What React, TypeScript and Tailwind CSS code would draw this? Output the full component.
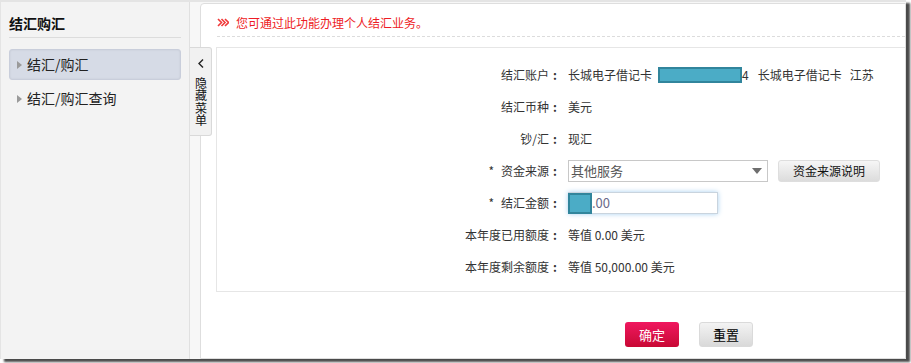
import React from "react";

function Tri() {
  return (
    <span className="inline-block w-0 h-0 border-y-[4px] border-y-transparent border-l-[5px] border-l-[#9a9a9a]" />
  );
}

function Row({ label, star, children }: { label: string; star?: boolean; children: React.ReactNode }) {
  return (
    <div className="flex items-center h-[32px]">
      <div className="w-[332px] text-right whitespace-nowrap">
        {star && <span className="mr-[7px]">*</span>}
        {label}
      </div>
      <span className="w-[12px] text-center font-bold">:</span>
      <div className="ml-[7px] flex items-center whitespace-nowrap">{children}</div>
    </div>
  );
}

export default function App() {
  return (
    <div className="w-[911px] h-[363px] bg-white font-['Noto_Sans_CJK_SC',sans-serif] text-[12px] text-[#333]">
      <div className="relative w-[906px] h-[359px] flex bg-[#f7f7f7] border-t-2 border-l border-[#e4e4e4] shadow-[4px_3px_2px_0_#4a4a4a]">
        {/* Sidebar */}
        <div className="w-[189px] h-full bg-[#f3f3f3] border-r border-[#e0e0e0] px-[8px]">
          <div className="h-[36px] pt-[12px] leading-[18px] text-[14px] font-bold text-[#111] border-b border-[#dcdcdc]">
            结汇购汇
          </div>
          <div className="mt-[11px] h-[31px] flex items-center rounded-[3px] bg-[#d6dbe6] border border-[#c9cedb] shadow-[inset_0_0_2px_rgba(0,0,0,0.08)] pl-[7px] text-[14px] text-[#222]">
            <Tri />
            <span className="ml-[5px]">结汇/购汇</span>
          </div>
          <div className="mt-[3px] h-[31px] flex items-center pl-[8px] text-[14px] text-[#222]">
            <Tri />
            <span className="ml-[5px]">结汇/购汇查询</span>
          </div>
        </div>

        {/* strip */}
        <div className="w-[10px] h-full bg-[#f7f7f7]" />

        {/* Hide menu tab */}
        <div className="absolute left-[189px] top-[45px] w-[22px] h-[89px] bg-[#f1f1f1] border border-l-0 border-[#d9d9d9] rounded-r-[3px] flex flex-col items-center text-[12px] text-[#111]">
          <svg width="6" height="9" viewBox="0 0 6 9" className="mt-[11px] mb-[9px] shrink-0">
            <polyline points="5,0.5 1,4.5 5,8.5" fill="none" stroke="#222" strokeWidth="1.4" />
          </svg>
          <span className="[writing-mode:vertical-rl] tracking-[0.5px] leading-[14px]">隐藏菜单</span>
        </div>

        {/* Main panel */}
        <div className="flex-1 mt-[1px] bg-white border border-[#dedede] rounded-tl-[4px]">
          <div className="ml-[16px] h-[33px] pt-[10px] leading-[18px] border-b border-dashed border-[#dcdcdc] flex items-start">
            <svg width="12" height="9" viewBox="0 0 12 9" className="mt-[4px]">
              <polyline points="1,1 4.5,4.5 1,8" fill="none" stroke="#f03a3a" strokeWidth="1.6" />
              <polyline points="4.5,1 8,4.5 4.5,8" fill="none" stroke="#f03a3a" strokeWidth="1.6" />
              <polyline points="8,1 11.5,4.5 8,8" fill="none" stroke="#f03a3a" strokeWidth="1.6" />
            </svg>
            <span className="ml-[7px] text-[#ee1c25]">您可通过此功能办理个人结汇业务。</span>
          </div>

          <div className="mt-[10px] ml-[15px] border border-r-0 border-[#e6e6e6] pt-[11px] pb-[8px]">
            <Row label="结汇账户">
              <span>长城电子借记卡</span>
              <span className="ml-[6px] inline-block w-[84px] h-[16px] bg-[#4bacc6] border-2 border-[#31859c]" />
              <span>4</span>
              <span className="ml-[9px]">长城电子借记卡</span>
              <span className="ml-[8px]">江苏</span>
            </Row>
            <Row label="结汇币种">美元</Row>
            <Row label="钞/汇">现汇</Row>
            <Row label="资金来源" star>
              <div className="w-[200px] h-[22px] border border-[#c8c8c8] bg-white flex items-center justify-between pl-[2px] pr-[5px] text-[13px] text-[#555]">
                <span>其他服务</span>
                <span className="inline-block w-0 h-0 border-x-[5px] border-x-transparent border-t-[6px] border-t-[#6e6e6e]" />
              </div>
              <button className="ml-[10px] w-[102px] h-[22px] rounded-[3px] bg-gradient-to-b from-[#f6f6f6] to-[#dcdcdc] border border-[#dedede] text-[12px] text-[#111]">
                资金来源说明
              </button>
            </Row>
            <Row label="结汇金额" star>
              <div className="w-[150px] h-[22px] border border-[#c9d4de] bg-white shadow-[0_0_5px_#a8d0f0] flex items-center">
                <span className="inline-block w-[24px] h-[21px] bg-[#4bacc6] border-2 border-[#31859c] -ml-[1px]" />
                <span className="text-[13px] text-[#6a6a8a]">.00</span>
              </div>
            </Row>
            <Row label="本年度已用额度">等值 0.00 美元</Row>
            <Row label="本年度剩余额度">等值 50,000.00 美元</Row>
          </div>

          <div className="mt-[30px] ml-[424px] flex gap-[20px]">
            <button className="w-[54px] h-[25px] rounded-[3px] bg-gradient-to-b from-[#f0175f] to-[#c80834] text-white text-[13px]">
              确定
            </button>
            <button className="w-[54px] h-[25px] rounded-[3px] bg-gradient-to-b from-[#f3f3f3] to-[#d9d9d9] border border-[#dadada] text-black text-[13px]">
              重置
            </button>
          </div>
        </div>
      </div>
    </div>
  );
}
